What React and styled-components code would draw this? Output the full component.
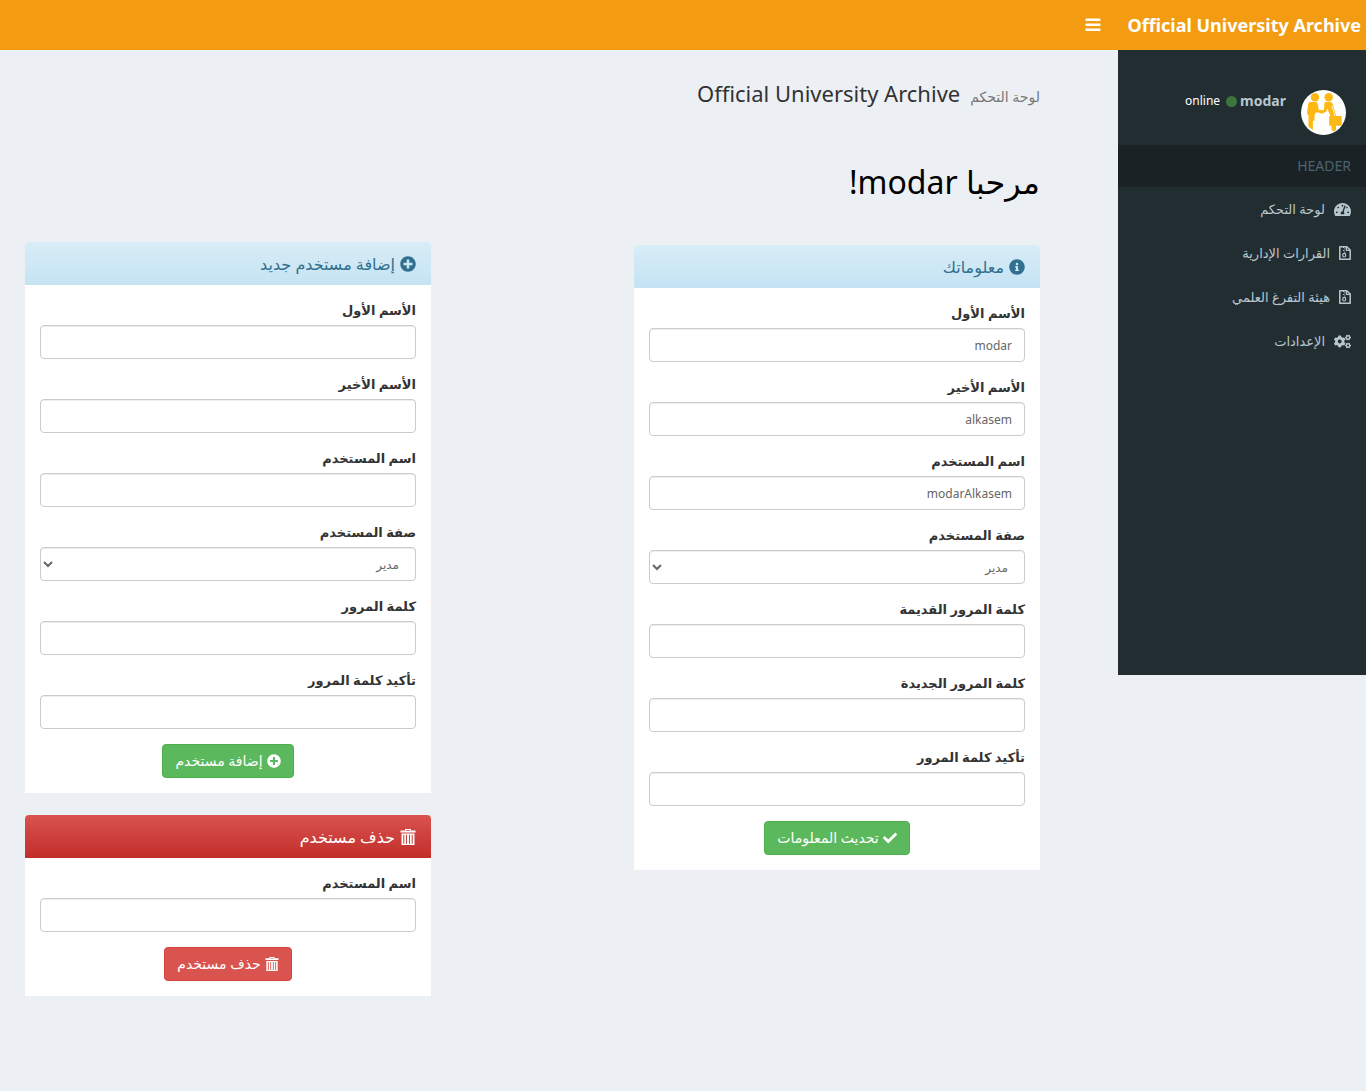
import React from "react";
import styled, { createGlobalStyle, css } from "styled-components";
import {
  FaTachometerAlt,
  FaCogs,
  FaInfoCircle,
  FaPlusCircle,
  FaCheck,
} from "react-icons/fa";

const fontStack = '"Noto Sans", "DejaVu Sans", sans-serif';

const GlobalStyle = createGlobalStyle`
  *, *::before, *::after { box-sizing: border-box; }
  body {
    margin: 0;
    min-height: 100vh;
    background: #ecf0f5;
    color: #333;
    font: 400 12px/20px ${fontStack};
  }
`;

const TopBar = styled.header`
  display: flex;
  align-items: center;
  height: 50px;
  background: #f39c12;
  color: #fff;
`;

const Brand = styled.a`
  flex: none;
  width: 248px;
  padding-inline-start: 5px;
  color: inherit;
  font-size: 18px;
  font-weight: 700;
  line-height: 50px;
  text-decoration: none;
  white-space: nowrap;
`;

const MenuToggle = styled.button`
  display: flex;
  padding: 15px 17px;
  border: 0;
  background: none;
  color: inherit;
  font-size: 16px;
  cursor: pointer;
`;

const Shell = styled.div`
  display: flex;
  align-items: flex-start;
`;

const Sidebar = styled.aside`
  flex: none;
  width: 248px;
  min-height: 625px;
  background: #222d32;
  color: #b8c7ce;
`;

const Profile = styled.div`
  display: flex;
  align-items: flex-start;
  padding: 40px 20px 10px;
`;

const Avatar = styled.svg`
  flex: none;
  width: 45px;
  height: 45px;
`;

const Identity = styled.div`
  display: flex;
  align-items: center;
  gap: 3px;
  margin-inline-start: 15px;
  line-height: 22px;
`;

const UserName = styled.strong`
  font-size: 14px;
`;

const StatusDot = styled.span`
  width: 11px;
  height: 11px;
  border-radius: 50%;
  background: #3c763d;
`;

const Status = styled.a`
  padding-inline-start: 3px;
  color: #fff;
  text-decoration: none;
`;

const MenuHeading = styled.div`
  padding: 11px 15px;
  background: #1a2226;
  color: #4b646f;
  font-size: 14px;
`;

const Menu = styled.ul`
  margin: 0;
  padding: 0;
  list-style: none;
`;

const MenuLink = styled.a`
  display: flex;
  align-items: center;
  gap: 9px;
  padding: 12px 15px;
  color: inherit;
  font-size: 13px;
  text-decoration: none;

  svg {
    font-size: ${(p) => (p.$wide ? "17px" : "14px")};
  }
`;

const Content = styled.main`
  flex: 1;
  min-width: 0;
  padding: 30px 78px 30px 25px;
`;

const PageTitle = styled.h1`
  display: flex;
  align-items: baseline;
  gap: 10px;
  margin: 0;
  font-size: 22px;
  font-weight: 400;
  line-height: 26px;

  small {
    color: #777;
    font-size: 14px;
  }
`;

const Welcome = styled.h2`
  margin: 52px 0 0;
  color: #000;
  font-size: 32px;
  font-weight: 400;
  line-height: 40px;
`;

const Columns = styled.div`
  display: grid;
  grid-template-columns: 1fr 1fr;
  gap: 20%;
  align-items: start;
  margin-top: 40px;
`;

const Column = styled.div`
  display: grid;
  gap: 22px;
  padding-top: ${(p) => (p.$lowered ? "3px" : "0")};
`;

const tones = {
  info: css`
    background: linear-gradient(#d9edf7, #c4e3f3);
    color: #31708f;
  `,
  danger: css`
    background: linear-gradient(#d9534f, #c12e2a);
    color: #fff;
  `,
};

const Panel = styled.section`
  overflow: hidden;
  border-radius: 4px 4px 0 0;
  background: #fff;
`;

const PanelTitle = styled.h3`
  display: flex;
  align-items: center;
  gap: 5px;
  height: 43px;
  margin: 0;
  padding: 0 15px;
  font-size: 16px;
  font-weight: 400;
  ${(p) => tones[p.$tone]}
`;

const Form = styled.form`
  display: grid;
  gap: 15px;
  padding: 15px;
`;

const Field = styled.div`
  display: grid;
  gap: 5px;
`;

const Label = styled.label`
  font-size: 13px;
  font-weight: 700;
  line-height: 20px;
`;

const control = css`
  width: 100%;
  height: 34px;
  border: 1px solid #ccc;
  border-radius: 4px;
  background: #fff;
  box-shadow: inset 0 1px 1px rgba(0, 0, 0, 0.075);
  color: #666;
  font: inherit;
`;

const Input = styled.input`
  ${control}
  padding: 6px 12px;
`;

const Select = styled.select`
  ${control}
  padding: 6px 12px;
  padding-inline-end: 0;
`;

const Button = styled.button`
  display: flex;
  align-items: center;
  justify-content: center;
  justify-self: center;
  gap: 4px;
  height: 34px;
  padding: 0 12px;
  border: 1px solid ${(p) => (p.$danger ? "#d43f3a" : "#4cae4c")};
  border-radius: 4px;
  background: ${(p) => (p.$danger ? "#d9534f" : "#5cb85c")};
  color: #fff;
  font: inherit;
  font-size: 14px;
  cursor: pointer;
`;

const BarsIcon = () => (
  <svg width="1em" height="1em" viewBox="0 0 16 16" fill="currentColor" aria-hidden="true">
    <rect x="0.500" y="1.500" width="15" height="2.500" rx="0.800" />
    <rect x="0.500" y="6.500" width="15" height="2.500" rx="0.800" />
    <rect x="0.500" y="11.500" width="15" height="2.500" rx="0.800" />
  </svg>
);

const ArchiveIcon = () => (
  <svg width="12" height="14" viewBox="0 0 12 14" fill="none" stroke="currentColor" aria-hidden="true">
    <path d="M1.800.8h6L11.200 4v9.200H.8V.8z" strokeWidth="1.500" strokeLinejoin="round" />
    <path d="M7.500 1v3.300H11" strokeWidth="1.200" />
    <path d="M4 1.500h1.200M5.200 3h1.200M4 4.500h1.200M5.200 6h1.200" strokeWidth="1.200" />
    <ellipse cx="5.200" cy="9.200" rx="1.500" ry="1.800" strokeWidth="1.200" />
  </svg>
);

const TrashIcon = () => (
  <svg width="1em" height="1em" viewBox="0 0 16 16" fill="currentColor" aria-hidden="true">
    <path
      fillRule="evenodd"
      d="M5 0h6v1.500h4.500V3.500H.5V1.500H5zM6 1v.7h4V1zM1.500 4.500h13V16h-13zM3.300 5.800v9h1v-9zM6 5.800v9h1v-9zM9 5.800v9h1v-9zM11.700 5.800v9h1v-9z"
    />
  </svg>
);

const HandshakeAvatar = () => (
  <Avatar viewBox="0 0 45 45" role="img" aria-label="modar">
    <circle cx="22.500" cy="22.500" r="22.500" fill="#fff" />
    <g fill="#fdb813">
      <circle cx="14" cy="7.300" r="4.200" />
      <circle cx="27.700" cy="7.300" r="4.200" />
      <path d="M9 12h5.500c2 0 2.300 2 2.600 4l.5 3.500 4.200 1c2 .6 1.500 3-.5 2.800l-6.300-1.100-1.500 3.600v5h-1.600V40l-4.400-3.500V25.500L6.200 24c0-3 .3-5.500.8-8 .2-2 .5-4 2-4z" />
      <path d="M24.500 12H29c1.600 0 2.500 1.200 3 3l3.200 11h5.500v9.800H35v4.500l-2.500 1.200-2-1.500v-4.200h-2.300V26h1.300l-3.300-7.500-1 3.500-5 1.500c-2 .3-2.200-2-.4-2.600l3.200-1.100.3-4.600c0-2 .4-3.200 1.200-3.200z" />
    </g>
    <path d="M31 16l3 10" stroke="#fff" strokeWidth="0.800" fill="none" />
  </Avatar>
);

const menuItems = [
  { text: "لوحة التحكم", Icon: FaTachometerAlt, wide: true },
  { text: "القرارات الإدارية", Icon: ArchiveIcon },
  { text: "هيئة التفرغ العلمي", Icon: ArchiveIcon },
  { text: "الإعدادات", Icon: FaCogs, wide: true },
];

const profileFields = [
  { id: "first", label: "الأسم الأول", value: "modar" },
  { id: "last", label: "الأسم الأخير", value: "alkasem" },
  { id: "user", label: "اسم المستخدم", value: "modarAlkasem" },
  { id: "role", label: "صفة المستخدم", options: ["مدير"] },
  { id: "old", label: "كلمة المرور القديمة", type: "password" },
  { id: "new", label: "كلمة المرور الجديدة", type: "password" },
  { id: "confirm", label: "تأكيد كلمة المرور", type: "password" },
];

const newUserFields = [
  { id: "first", label: "الأسم الأول" },
  { id: "last", label: "الأسم الأخير" },
  { id: "user", label: "اسم المستخدم" },
  { id: "role", label: "صفة المستخدم", options: ["مدير"] },
  { id: "password", label: "كلمة المرور", type: "password" },
  { id: "confirm", label: "تأكيد كلمة المرور", type: "password" },
];

const deleteFields = [{ id: "user", label: "اسم المستخدم" }];

function FormPanel({ name, tone, title, Icon, fields, action, ActionIcon }) {
  return (
    <Panel>
      <PanelTitle $tone={tone}>
        <Icon />
        {title}
      </PanelTitle>
      <Form onSubmit={(e) => e.preventDefault()}>
        {fields.map((f) => {
          const id = `${name}-${f.id}`;
          return (
            <Field key={id}>
              <Label htmlFor={id}>{f.label}</Label>
              {f.options ? (
                <Select id={id}>
                  {f.options.map((o) => (
                    <option key={o}>{o}</option>
                  ))}
                </Select>
              ) : (
                <Input id={id} type={f.type || "text"} defaultValue={f.value} />
              )}
            </Field>
          );
        })}
        <Button type="submit" $danger={tone === "danger"}>
          <ActionIcon />
          {action}
        </Button>
      </Form>
    </Panel>
  );
}

export default function App() {
  return (
    <div dir="rtl" lang="ar">
      <GlobalStyle />
      <TopBar>
        <Brand href="#">Official University Archive</Brand>
        <MenuToggle type="button" aria-label="القائمة">
          <BarsIcon />
        </MenuToggle>
      </TopBar>
      <Shell>
        <Sidebar>
          <Profile>
            <HandshakeAvatar />
            <Identity>
              <UserName>modar</UserName>
              <StatusDot />
              <Status href="#">online</Status>
            </Identity>
          </Profile>
          <MenuHeading>HEADER</MenuHeading>
          <nav>
            <Menu>
              {menuItems.map(({ text, Icon, wide }) => (
                <li key={text}>
                  <MenuLink href="#" $wide={wide}>
                    <Icon />
                    {text}
                  </MenuLink>
                </li>
              ))}
            </Menu>
          </nav>
        </Sidebar>
        <Content>
          <PageTitle>
            <small>لوحة التحكم</small>
            Official University Archive
          </PageTitle>
          <Welcome>مرحبا modar!</Welcome>
          <Columns>
            <Column $lowered>
              <FormPanel
                name="profile"
                tone="info"
                title="معلوماتك"
                Icon={FaInfoCircle}
                fields={profileFields}
                action="تحديث المعلومات"
                ActionIcon={FaCheck}
              />
            </Column>
            <Column>
              <FormPanel
                name="create"
                tone="info"
                title="إضافة مستخدم جديد"
                Icon={FaPlusCircle}
                fields={newUserFields}
                action="إضافة مستخدم"
                ActionIcon={FaPlusCircle}
              />
              <FormPanel
                name="delete"
                tone="danger"
                title="حذف مستخدم"
                Icon={TrashIcon}
                fields={deleteFields}
                action="حذف مستخدم"
                ActionIcon={TrashIcon}
              />
            </Column>
          </Columns>
        </Content>
      </Shell>
    </div>
  );
}
